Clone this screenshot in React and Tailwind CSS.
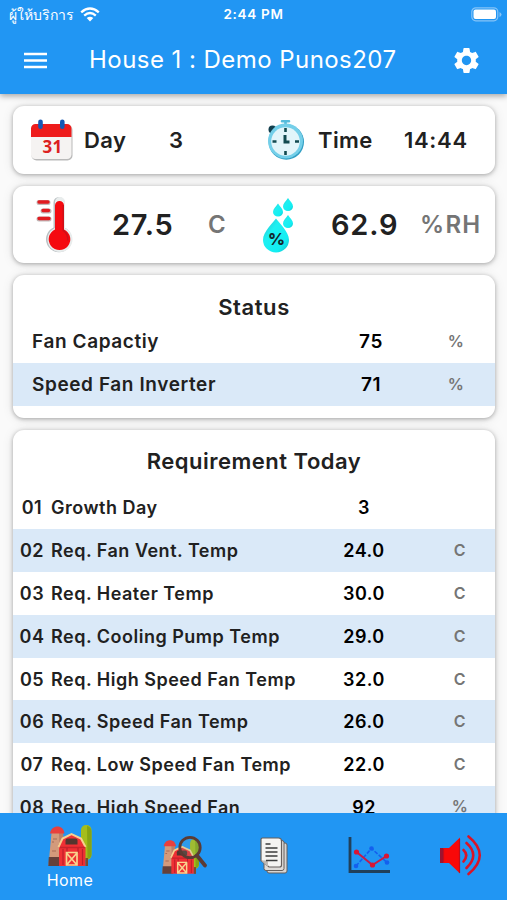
import React from 'react';

const status = [
  { label: 'Fan Capactiy', value: '75', unit: '%' },
  { label: 'Speed Fan Inverter', value: '71', unit: '%' },
];

const requirements = [
  { no: '01', label: 'Growth Day', value: '3', unit: '' },
  { no: '02', label: 'Req. Fan Vent. Temp', value: '24.0', unit: 'C' },
  { no: '03', label: 'Req. Heater Temp', value: '30.0', unit: 'C' },
  { no: '04', label: 'Req. Cooling Pump Temp', value: '29.0', unit: 'C' },
  { no: '05', label: 'Req. High Speed Fan Temp', value: '32.0', unit: 'C' },
  { no: '06', label: 'Req. Speed Fan Temp', value: '26.0', unit: 'C' },
  { no: '07', label: 'Req. Low Speed Fan Temp', value: '22.0', unit: 'C' },
  { no: '08', label: 'Req. High Speed Fan', value: '92', unit: '%' },
];

function CalendarIcon() {
  return (
    <svg width="43" height="42" viewBox="0 0 43 42" className="shrink-0">
      <rect x="1.500" y="6" width="41" height="35.500" rx="5" fill="#b9b9b9" />
      <rect x="1" y="5" width="40.500" height="35" rx="4.500" fill="#f5f3f2" />
      <path d="M1 18V9.500a4.500 4.500 0 0 1 4.500-4.500h31.500a4.500 4.500 0 0 1 4.500 4.500V18z" fill="#ee1c1c" />
      <rect x="8.200" y="0.500" width="4.600" height="9.500" rx="2.300" fill="#1558b5" />
      <rect x="30" y="0.500" width="4.600" height="9.500" rx="2.300" fill="#1558b5" />
      <text x="22.500" y="34" textAnchor="middle" fontSize="17" fontWeight="700" fill="#dc2020" fontFamily="Open Sans, sans-serif">31</text>
    </svg>
  );
}

function StopwatchIcon() {
  return (
    <svg width="38" height="42" viewBox="0 0 38 42" className="shrink-0">
      <circle cx="5.500" cy="10.500" r="4" fill="#123f4d" />
      <path d="M15 2.200h7M18.500 3v5" stroke="#56bcdc" strokeWidth="2.600" strokeLinecap="round" />
      <circle cx="19.300" cy="23" r="17.700" fill="#329fc4" />
      <circle cx="18.500" cy="22" r="17.500" fill="#74cfe9" />
      <circle cx="18.500" cy="22.500" r="14.300" fill="#e2f5fa" />
      <path d="M18.500 9v4M18.500 32v4M5.500 22.500h4M28 22.500h4" stroke="#124a50" strokeWidth="2.600" />
      <path d="M18 16v7h4.500" stroke="#124a50" strokeWidth="3" fill="none" />
    </svg>
  );
}

function ThermometerIcon() {
  return (
    <svg width="38" height="57" viewBox="-1 0 38 57" className="shrink-0">
      <path d="M17.500 6.500a5.500 5.500 0 0 1 11 0V31.500a13 13 0 1 1-11 0z" fill="#b9bfc2" />
      <path d="M19 6a5 5 0 0 1 10 0V32a12.500 12.500 0 1 1-10 0z" fill="#e9eded" />
      <path d="M19 9.500a4.500 4.500 0 0 1 9 0V33.500a10.800 10.800 0 1 1-9 0z" fill="#f50a10" />
      <path d="M27.200 9v25.500q5 3 4.500 10" stroke="#ce1018" strokeWidth="1.500" fill="none" />
      <path d="M3 6.500h9M7 15h6M3 23h10" stroke="#c2b9b9" strokeWidth="5" strokeLinecap="round" />
      <path d="M3 6h9M7 14.500h5.500M3 22.500h10" stroke="#e11b20" strokeWidth="3.300" strokeLinecap="round" />
    </svg>
  );
}

function HumidityIcon() {
  return (
    <svg width="33" height="56" viewBox="0 0 33 56" className="shrink-0">
      <defs>
        <linearGradient id="drop" x1="0" y1="0" x2="1" y2="1">
          <stop offset="0" stopColor="#2bb9c4" />
          <stop offset="0.35" stopColor="#1ef0f2" />
          <stop offset="0.75" stopColor="#12eef2" />
          <stop offset="1" stopColor="#12b6c4" />
        </linearGradient>
      </defs>
      <g fill="url(#drop)">
        <path d="M14 21.500C17 26 27 34.500 27 43a13 12.500 0 0 1-26 0C1 34.500 11 26 14 21.500z" />
        <path d="M26 1c2 3 5 5.500 5 8.500a5 4.500 0 0 1-10 0c0-3 3-5.500 5-8.500z" />
        <path d="M16 6.500c2 3 5 5.500 5 8.500a5 4.500 0 0 1-10 0c0-3 3-5.500 5-8.500z" />
        <path d="M26 18c2 3 5 5.500 5 8.500a5 4.500 0 0 1-10 0c0-3 3-5.500 5-8.500z" />
      </g>
      <text x="14.500" y="47.500" textAnchor="middle" fontSize="16.500" letterSpacing="0" fontWeight="800" fill="#12282d" fontFamily="Inter, sans-serif">%</text>
    </svg>
  );
}

function Barn() {
  return (
    <g>
      <rect x="33" y="0" width="10.500" height="35" rx="5" fill="#a5bd1c" />
      <path d="M39 1q4.500 1 4.500 6v22q0 4-4 5z" fill="#86a414" />
      <path d="M3.500 8h11.500l2 32H0.500z" fill="#d39a7b" />
      <path d="M11 8h4l2 25h-5z" fill="#b97f67" />
      <path d="M5 14h4M10 20h4M4 26h4M4 17h2" stroke="#a86b57" strokeWidth="1.200" />
      <path d="M0.800 32h12v9H0.300z" fill="#65413a" />
      <path d="M2 8.500C2.500 4 6 1.500 9.500 1.500S16 4 16.500 8.500z" fill="#e8403d" />
      <path d="M11 41V21l3-7 9.500-5 9.500 5 4.500 7v20z" fill="#ef3034" />
      <path d="M15 24v16M19 23v5M30 23v5M34.500 24v16" stroke="#bd1e2b" strokeWidth="1.200" />
      <path d="M10.500 22l4-8.500L23.500 9l9.500 4.500 4.500 8.500" stroke="#f6cf91" strokeWidth="2" fill="none" />
      <path d="M17.500 19.500v-4q0-2 2-2h8q2 0 2 2v4z" fill="#54352e" />
      <path d="M12 22.500h25" stroke="#c7232b" strokeWidth="1.500" />
      <path d="M18.500 40V27.500h10.500V40zM18.500 28l10.500 12M29 28L18.500 40" stroke="#f8d38e" strokeWidth="1.700" fill="none" />
      <path d="M37.500 33h2.500v8h-2.500z" fill="#7a4b32" />
    </g>
  );
}

function FarmIcon() {
  return (
    <svg width="44" height="42" viewBox="0 0 44 42">
      <Barn />
    </svg>
  );
}

function FarmSearchIcon() {
  return (
    <svg width="46" height="41" viewBox="0 0 46 41">
      <g transform="translate(0 4) scale(0.85)">
        <Barn />
      </g>
      <circle cx="28" cy="12.500" r="10.200" fill="#7fb2b8" fillOpacity="0.15" stroke="#5b3b34" strokeWidth="2.800" />
      <path d="M35 20.500l8 10" stroke="#5b3b34" strokeWidth="3.800" strokeLinecap="round" />
    </svg>
  );
}

function DocumentsIcon() {
  return (
    <svg width="28" height="37" viewBox="0 0 28 37">
      <rect x="7" y="6" width="20" height="30" rx="2" fill="#d8d5d2" stroke="#655f5c" strokeWidth="1" />
      <rect x="4" y="3.500" width="20" height="30" rx="2" fill="#dedbd8" stroke="#655f5c" strokeWidth="1" />
      <path d="M2.500 1h16q3 0 3 3v24q0 2-2 2H9L1 23.500V2.500Q1 1 2.500 1z" fill="#f5f4f2" stroke="#655f5c" strokeWidth="1.200" />
      <path d="M1 23.500h5q2 0 2 2V30z" fill="#bdb8b4" />
      <path d="M5.500 7h5M5.500 11h12M5.500 15h12M5.500 19h12M6 23.500h11.500" stroke="#3d3d3d" strokeWidth="1.700" />
    </svg>
  );
}

function ChartIcon() {
  return (
    <svg width="43" height="38" viewBox="0 0 43 38">
      <path d="M2 1v34.500h40" stroke="#21405a" strokeWidth="2.800" fill="none" />
      <path d="M8 30L23.500 12.500 39 26.500" stroke="#1460ee" strokeWidth="1.600" strokeDasharray="4 1.500" fill="none" />
      <path d="M8.500 16L24.500 29 38.500 20" stroke="#c61b48" strokeWidth="2" fill="none" />
      <g fill="#1460ee">
        <circle cx="8" cy="30" r="2.300" />
        <circle cx="23.500" cy="12.500" r="2.300" />
        <circle cx="39" cy="26.500" r="2.300" />
      </g>
      <g fill="#d81634">
        <circle cx="8.500" cy="16" r="2.600" />
        <circle cx="24.500" cy="29" r="2.600" />
        <circle cx="38.500" cy="20" r="2.600" />
      </g>
    </svg>
  );
}

function SpeakerIcon() {
  return (
    <svg width="44" height="41" viewBox="0 0 44 41">
      <path d="M1 13h9L21 2.500v36L10 28H1z" fill="#f90808" />
      <path d="M1 13h3v15H1z" fill="#9c1430" />
      <path d="M4.500 13.500v14M20.500 4v34" stroke="#c40c1c" strokeWidth="1.200" />
      <path d="M24.500 15q5.500 5 0 11.500M27.500 8q13.500 12 0 25M29.500 1.500q22.500 18.500 0 37.500" stroke="#d91427" strokeWidth="2.600" fill="none" strokeLinecap="round" />
    </svg>
  );
}

function Card({ className, children }) {
  return (
    <section className={`shrink-0 bg-white rounded-[11px] shadow-[0_1px_4px_rgba(0,0,0,0.3),0_1px_12px_rgba(0,0,0,0.1)] ${className}`}>
      {children}
    </section>
  );
}

function Cell({ value, unit }) {
  return (
    <>
      <span className="w-20 text-center text-black">{value}</span>
      <span className={`w-12 text-center text-base leading-5 text-[#757575] ${unit === '%' ? 'pb-[3px]' : 'pb-px'}`}>{unit}</span>
    </>
  );
}

export default function App() {
  return (
    <div className="h-[900px] w-[507px] flex flex-col overflow-hidden bg-[#fafafa] text-[#212121]" style={{ fontFamily: 'Inter, "Noto Sans", sans-serif' }}>
      <header className="h-[94px] shrink-0 bg-[#2196f3] text-white relative z-10 shadow-[0_2px_6px_rgba(0,0,0,0.35)]">
        <div className="h-7 grid grid-cols-3 items-center px-[9px] text-[13px]">
          <div className="flex items-center">
            <span className="w-[71px] text-[14px] whitespace-nowrap">ผู้ให้บริการ</span>
            <svg width="20" height="15" viewBox="0 0 20 15" fill="none" stroke="white" strokeWidth="2.400">
              <path d="M1.200 5.300q8.800-7.600 17.600 0M4.200 8.600q5.800-5 11.600 0" />
              <path d="M6.700 11Q10 8.300 13.300 11L10 14.500z" fill="white" stroke="none" />
            </svg>
          </div>
          <span className="text-center text-[13.500px] font-semibold tracking-[0.7px]">2:44 PM</span>
          <svg width="31" height="15" viewBox="0 0 31 15" className="justify-self-end -mr-1">
            <rect x="0.800" y="0.800" width="26" height="13" rx="4" fill="none" stroke="#85c4f8" strokeWidth="1.200" />
            <rect x="2.500" y="2.500" width="22.500" height="9.500" rx="2" fill="white" />
            <path d="M28.500 5v5q2-1 2-2.500T28.500 5z" fill="#85c4f8" />
          </svg>
        </div>
        <div className="h-16 flex items-center pl-6 pr-[27px]">
          <svg width="23" height="17" viewBox="0 0 23 17" stroke="white" strokeWidth="2.500">
            <path d="M0 2h23M0 8.500h23M0 15h23" />
          </svg>
          <h1 className="flex-1 pl-[42px] text-2xl tracking-[0.450px] whitespace-nowrap">House 1 : Demo Punos207</h1>
          <svg width="31" height="31" viewBox="0 0 24 24" fill="white" className="-mr-0.5">
            <path d="M19.140 12.940c.040-.3.060-.61.060-.94 0-.32-.020-.64-.070-.94l2.030-1.580c.18-.14.230-.41.120-.61l-1.920-3.320c-.12-.22-.37-.29-.59-.22l-2.390.96c-.5-.38-1.030-.7-1.620-.94l-.36-2.540c-.040-.24-.24-.41-.48-.41h-3.840c-.24 0-.43.17-.47.41l-.36 2.540c-.59.24-1.130.57-1.620.94l-2.390-.96c-.22-.080-.47 0-.59.22L2.740 8.870c-.12.21-.080.47.12.61l2.030 1.580c-.050.3-.090.63-.090.94s.020.64.070.94l-2.030 1.580c-.18.14-.23.41-.12.61l1.920 3.320c.12.22.37.29.59.22l2.390-.96c.5.38 1.030.7 1.620.94l.36 2.540c.050.24.24.41.48.41h3.840c.24 0 .44-.17.47-.41l.36-2.540c.59-.24 1.130-.56 1.620-.94l2.390.96c.22.080.47 0 .59-.22l1.920-3.320c.12-.22.070-.47-.12-.61l-2.010-1.580zM12 15.600c-1.980 0-3.600-1.620-3.600-3.600s1.620-3.600 3.600-3.600 3.600 1.620 3.600 3.600-1.620 3.600-3.600 3.600z" />
          </svg>
        </div>
      </header>

      <main className="flex-1 min-h-0 overflow-hidden flex flex-col gap-3 px-3 pl-[13px] pt-3">
        <Card className="h-[68px] flex items-center text-[22px] font-semibold tracking-[0.4px]">
          <div className="w-[254px] flex items-center pl-[17px]">
            <CalendarIcon />
            <span className="w-[96px] pl-[11px]">Day</span>
            <span>3</span>
          </div>
          <div className="flex-1 flex items-center">
            <StopwatchIcon />
            <span className="w-[99px] pl-[13px]">Time</span>
            <span className="tracking-[0.7px]">14:44</span>
          </div>
        </Card>

        <Card className="h-[77px] flex items-center text-[29px] font-semibold tracking-[0.8px]">
          <div className="w-[249px] flex items-center pl-[22px]">
            <ThermometerIcon />
            <span className="w-[135px] pl-[39px]">27.5</span>
            <span className="text-2xl text-[#757575]">C</span>
          </div>
          <div className="flex-1 flex items-center">
            <HumidityIcon />
            <span className="w-[125px] pl-[36px]">62.9</span>
            <span className="text-2xl text-[#757575] tracking-[1.3px]">%RH</span>
          </div>
        </Card>

        <Card className="h-[143px] text-[19px] font-semibold tracking-[0.6px]">
          <h2 className="h-[44.500px] pt-[18px] text-center text-[22px] leading-7">Status</h2>
          {status.map((row, i) => (
            <div key={row.label} className={`h-[43px] flex items-center pt-[2px] pl-[19px] pr-[15px] ${i % 2 ? 'bg-[#dae9f8]' : ''}`}>
              <span className="flex-1">{row.label}</span>
              <div className="w-[149px] flex items-center justify-between">
                <Cell value={row.value} unit={row.unit} />
              </div>
            </div>
          ))}
        </Card>

        <Card className="text-[18px] font-semibold tracking-[0.5px]">
          <h2 className="h-[56px] pt-[17px] text-center text-[22px] leading-7">Requirement Today</h2>
          {requirements.map((row, i) => (
            <div key={row.no} className={`h-[42.900px] flex items-center pl-[5px] pr-[11px] ${i % 2 ? 'bg-[#dae9f8]' : ''}`}>
              <span className="w-7 text-center">{row.no}</span>
              <span className="flex-1 pl-[5px]">{row.label}</span>
              <div className="w-[160px] flex items-center justify-between">
                <Cell value={row.value} unit={row.unit} />
              </div>
            </div>
          ))}
        </Card>
      </main>

      <nav className="h-[87px] shrink-0 grid grid-cols-[140px_90px_88px_102px_82px] justify-items-center items-center bg-[#2196f3] text-white pb-[3px]">
        <div className="flex flex-col items-center pt-[7px]">
          <FarmIcon />
          <span className="text-base leading-6 tracking-[0.4px] pt-px">Home</span>
        </div>
        <FarmSearchIcon />
        <DocumentsIcon />
        <ChartIcon />
        <SpeakerIcon />
      </nav>
    </div>
  );
}
